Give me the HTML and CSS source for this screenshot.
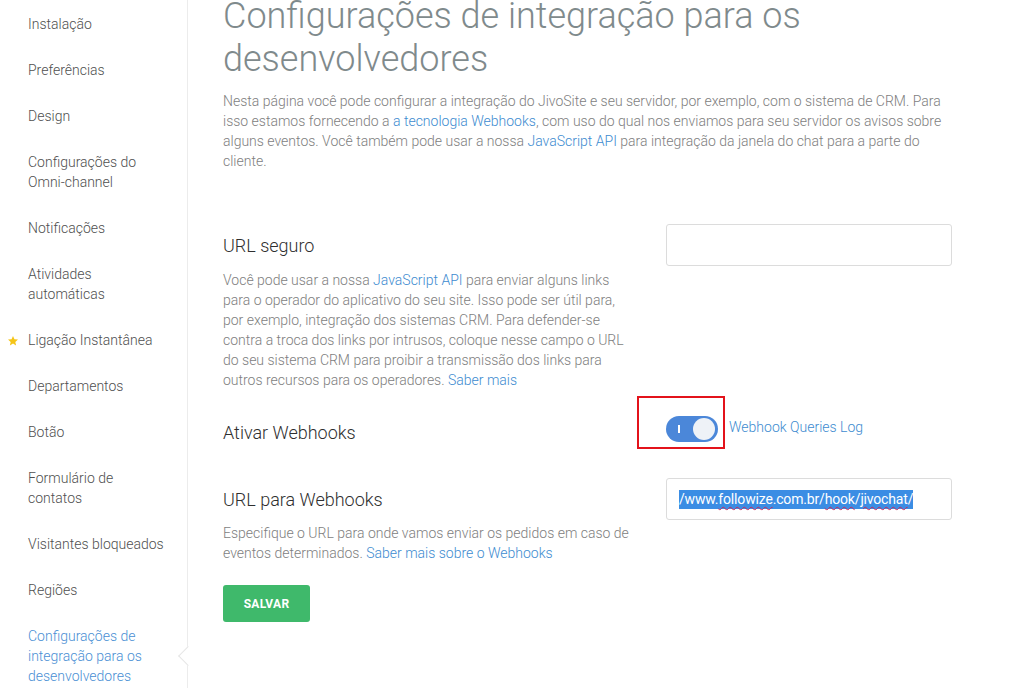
FILE: index.html
```html
<!DOCTYPE html>
<html lang="pt-BR">
<head>
<meta charset="utf-8">
<title>Configurações de integração para os desenvolvedores</title>
<link rel="stylesheet" href="styles.css">
</head>
<body>
<div class="layout">
  <nav class="sidebar">
    <a class="nav-item">Instalação</a>
    <a class="nav-item">Preferências</a>
    <a class="nav-item">Design</a>
    <a class="nav-item">Configurações do Omni-channel</a>
    <a class="nav-item">Notificações</a>
    <a class="nav-item">Atividades automáticas</a>
    <a class="nav-item starred">
      <svg class="star" viewBox="0 0 24 24" width="12" height="12"><path d="M12 2l2.9 6.6 7.1.6-5.4 4.7 1.6 7-6.2-3.7-6.2 3.7 1.6-7L2 9.2l7.1-.6z" fill="#f5c518"/></svg>
      Ligação Instantânea
    </a>
    <a class="nav-item">Departamentos</a>
    <a class="nav-item">Botão</a>
    <a class="nav-item">Formulário de contatos</a>
    <a class="nav-item">Visitantes bloqueados</a>
    <a class="nav-item">Regiões</a>
    <a class="nav-item active">Configurações de integração para os desenvolvedores</a>
  </nav>

  <main class="content">
    <h1 class="page-title">Configurações de integração para os desenvolvedores</h1>
    <p class="intro">Nesta página você pode configurar a integração do JivoSite e seu servidor, por exemplo, com o sistema de CRM. Para isso estamos fornecendo a <a class="link">a tecnologia Webhooks</a>, com uso do qual nos enviamos para seu servidor os avisos sobre alguns eventos. Você também pode usar a nossa <a class="link">JavaScript API</a> para integração da janela do chat para a parte do cliente.</p>

    <section class="field field-secure">
      <div class="field-info">
        <h2 class="field-label">URL seguro</h2>
        <p class="field-desc">Você pode usar a nossa <a class="link">JavaScript API</a> para enviar alguns links para o operador do aplicativo do seu site. Isso pode ser útil para, por exemplo, integração dos sistemas CRM. Para defender-se contra a troca dos links por intrusos, coloque nesse campo o URL do seu sistema CRM para proibir a transmissão dos links para outros recursos para os operadores. <a class="link">Saber mais</a></p>
      </div>
      <div class="field-control">
        <div class="text-input"></div>
      </div>
    </section>

    <section class="field field-toggle">
      <div class="field-info">
        <h2 class="field-label">Ativar Webhooks</h2>
      </div>
      <div class="field-control toggle-row">
        <span class="toggle-wrap">
          <span class="toggle on"><span class="toggle-mark"></span><span class="toggle-knob"></span></span>
          <span class="highlight-box"></span>
        </span>
        <a class="link log-link">Webhook Queries Log</a>
      </div>
    </section>

    <section class="field field-webhook">
      <div class="field-info">
        <h2 class="field-label">URL para Webhooks</h2>
        <p class="field-desc">Especifique o URL para onde vamos enviar os pedidos em caso de eventos determinados. <a class="link">Saber mais sobre o Webhooks</a></p>
      </div>
      <div class="field-control">
        <div class="text-input filled"><span class="selected">/www.<span class="typo">followize</span>.com.br/<span class="typo">hook</span>/<span class="typo">jivochat</span>/</span></div>
      </div>
    </section>

    <button class="btn-save" type="button">SALVAR</button>
  </main>
</div>
</body>
</html>
```

FILE: styles.css
```css
html, body {
  margin: 0;
  padding: 0;
  background: #fff;
  overflow: hidden;
}

body {
  font-family: Roboto, "Liberation Sans", sans-serif;
  font-size: 14px;
  line-height: 20px;
  font-weight: 300;
  color: #888;
}

.layout {
  display: flex;
  min-height: 688px;
}

/* sidebar menu */
.sidebar {
  width: 187px;
  flex: none;
  border-right: 1px solid #ececec;
  display: flex;
  flex-direction: column;
  padding-top: 1px;
}

.nav-item {
  position: relative;
  display: block;
  padding: 13px 20px 13px 28px;
  color: #4f4f4f;
  font-size: 14px;
  line-height: 20px;
  cursor: pointer;
}

.nav-item .star {
  position: absolute;
  left: 7px;
  top: 18px;
}

.nav-item.active {
  color: #4a8fd4;
}

/* notch on the sidebar edge pointing at the current page */
.nav-item.active::after {
  content: "";
  position: absolute;
  right: -8px;
  top: 50%;
  width: 13px;
  height: 13px;
  margin-top: -7px;
  background: #fff;
  border-left: 1px solid #e6e6e6;
  border-bottom: 1px solid #e6e6e6;
  transform: rotate(45deg);
}

/* main area */
.content {
  flex: 1;
  padding-left: 35px;
  padding-right: 60px;
}

.page-title {
  margin: -5px 0 0;
  font-size: 36px;
  line-height: 43px;
  font-weight: 300;
  color: #7f8a8c;
  max-width: 720px;
}

.intro {
  margin: 10px 0 0;
  max-width: 722px;
  color: #7e7e7e;
}

.link {
  color: #3d8bd0;
  text-decoration: none;
  cursor: pointer;
}

.field {
  display: grid;
  grid-template-columns: 407px 286px;
  column-gap: 36px;
  align-items: start;
}

.field-label {
  margin: 0;
  font-size: 18px;
  line-height: 24px;
  font-weight: 300;
  color: #2f2f2f;
}

.field-desc {
  margin: 0;
  color: #7e7e7e;
}

.field-secure {
  margin-top: 53px;
}
.field-secure .field-label {
  margin-top: 10px;
}
.field-secure .field-desc {
  margin-top: 12px;
}

.field-toggle {
  margin-top: 26px;
}
.field-toggle .field-label {
  margin-top: 5px;
}

.field-webhook {
  margin-top: 33px;
}
.field-webhook .field-label {
  margin-top: 10px;
}
.field-webhook .field-desc {
  margin-top: 11px;
}

.text-input {
  box-sizing: border-box;
  height: 42px;
  border: 1px solid #dcdcdc;
  border-radius: 3px;
  background: #fff;
  padding: 0 12px;
  display: flex;
  align-items: center;
  overflow: hidden;
  white-space: nowrap;
  font-size: 14px;
  font-weight: 400;
  letter-spacing: -0.17px;
  color: #333;
}

.selected {
  background: #3b8de4;
  color: #fff;
  line-height: 19px;
}

.typo {
  text-decoration: underline wavy #c8285a;
  text-decoration-thickness: 1px;
  text-underline-offset: 2px;
}

/* switch */
.toggle-row {
  display: flex;
  align-items: center;
  height: 26px;
}

.toggle-wrap {
  position: relative;
  display: inline-block;
  width: 52px;
  height: 26px;
}

.toggle {
  position: relative;
  display: block;
  width: 52px;
  height: 26px;
  border-radius: 13px;
  background: #4b87d9;
}

.toggle-mark {
  position: absolute;
  left: 12px;
  top: 9px;
  width: 2px;
  height: 8px;
  background: #fff;
}

.toggle-knob {
  position: absolute;
  right: 3px;
  top: 2px;
  width: 22px;
  height: 22px;
  border-radius: 50%;
  background: #eef2f7;
}

/* red outline drawn around the switch */
.highlight-box {
  position: absolute;
  left: -29px;
  top: -20px;
  width: 84px;
  height: 49px;
  border: 2px solid #e3131b;
}

.log-link {
  margin-left: 11px;
  font-size: 14px;
  margin-top: -4px;
}

.btn-save {
  margin-top: 22px;
  width: 87px;
  height: 37px;
  border: none;
  border-radius: 3px;
  background: #3fb96b;
  color: #fff;
  font-family: Roboto, "Liberation Sans", sans-serif;
  font-size: 12px;
  font-weight: 700;
  letter-spacing: 0.3px;
  cursor: pointer;
}
```
